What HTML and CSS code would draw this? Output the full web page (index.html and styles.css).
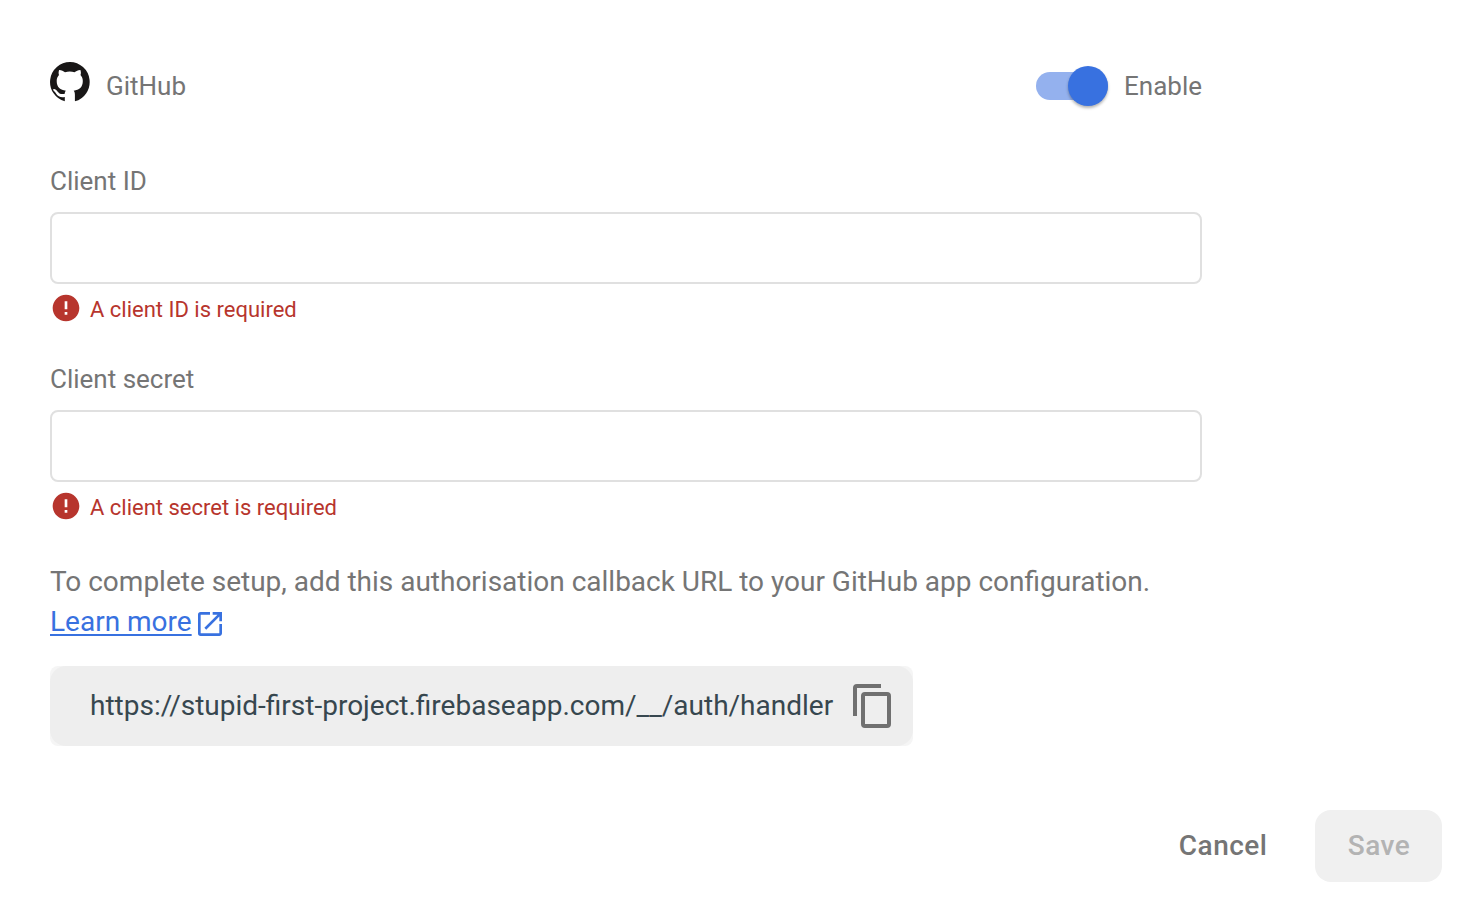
FILE: index.html
```html
<!DOCTYPE html>
<html lang="en">
<head>
<meta charset="utf-8">
<title>GitHub sign-in provider</title>
<link rel="stylesheet" href="styles.css">
</head>
<body>
<main class="panel">
  <header class="provider">
    <svg class="provider-logo" viewBox="0 0 40 40" aria-hidden="true"><path d="M20 0A20 20 0 0 0 14.800 39.300V35C10.500 35.700 8 34.500 6.200 31.800C5.100 30.100 4.300 29.200 3.300 28.300C2.300 27.200 4.300 26.600 5.900 27.700C7.500 28.800 8 30.400 9.500 31.400C11 32.200 13.200 32.100 14.800 31.700C14.800 30.200 15.200 29.300 15.900 28.700C10.300 28 6.700 25.300 6.700 19C6.700 16.400 7.700 14.600 9 13.100C8.400 11.500 8.500 9.700 9.100 8C11.300 7.900 13.400 9 15 10.200C18.100 9.400 21.400 9.400 24.500 10.200C26.200 9 28.200 7.900 30.400 8C31 9.700 31.100 11.500 30.500 13.100C31.800 14.600 32.800 16.400 32.800 19C32.800 25.300 29.100 28 23.700 28.700C24.500 29.500 24.900 30.800 24.900 32.700V39.300A20 20 0 0 0 20 0Z"/></svg>
    <span class="provider-name">GitHub</span>
    <span class="switch"><span class="switch-track"><span class="switch-thumb"></span></span></span>
    <span class="enable">Enable</span>
  </header>
  <section class="field">
    <label class="label" for="cid">Client ID</label>
    <input class="input" id="cid" type="text">
    <div class="error"><svg class="error-icon" viewBox="0 0 24 24"><path d="M12 2C6.480 2 2 6.480 2 12s4.480 10 10 10 10-4.480 10-10S17.520 2 12 2zm1 15h-2v-2h2v2zm0-4h-2V7h2v6z"/></svg><span class="error-text">A client ID is required</span></div>
  </section>
  <section class="field">
    <label class="label" for="secret">Client secret</label>
    <input class="input" id="secret" type="text">
    <div class="error"><svg class="error-icon" viewBox="0 0 24 24"><path d="M12 2C6.480 2 2 6.480 2 12s4.480 10 10 10 10-4.480 10-10S17.520 2 12 2zm1 15h-2v-2h2v2zm0-4h-2V7h2v6z"/></svg><span class="error-text">A client secret is required</span></div>
  </section>
  <p class="setup"><span class="setup-text">To complete setup, add this authorisation callback URL to your GitHub app configuration.</span><br><a class="learn" href="#">Learn more</a><svg class="open-icon" viewBox="0 0 24 24"><path d="M19 19H5V5h7V3H5a2 2 0 0 0-2 2v14a2 2 0 0 0 2 2h14c1.100 0 2-.9 2-2v-7h-2v7zM14 3v2h3.590l-9.830 9.830 1.410 1.410L19 6.410V10h2V3h-7z"/></svg></p>
  <div class="callback">
    <div class="callback-body">
      <span class="url">https://stupid-first-project.firebaseapp.com/__/auth/handler</span>
      <svg class="copy-icon" viewBox="0 0 24 24"><path d="M16 1H4a2 2 0 0 0-2 2v14h2V3h12V1zm3 4H8a2 2 0 0 0-2 2v14a2 2 0 0 0 2 2h11a2 2 0 0 0 2-2V7a2 2 0 0 0-2-2zm0 16H8V7h11v14z"/></svg>
    </div>
  </div>
  <footer class="actions">
    <button class="button cancel" type="button">Cancel</button>
    <button class="button save" type="button" disabled>Save</button>
  </footer>
</main>
</body>
</html>
```

FILE: styles.css
```css
* { box-sizing: border-box; }
body { margin: 0; background: #fff; color: #757575; font-family: Roboto, sans-serif; overflow: hidden; }
.panel { height: 910px; padding: 62px 18px 0 50px; display: flex; flex-direction: column; }
.provider { width: 1152px; height: 48px; display: flex; align-items: center; font-size: 26px; }
.provider-logo { width: 40px; height: 40px; margin: 0 16px 8px 0; fill: #191717; }
.switch { margin-left: auto; margin-right: 16px; width: 72px; }
.switch-track { display: flex; justify-content: flex-end; align-items: center; height: 28px; border-radius: 14px; background: #94b1ee; }
.switch-thumb { width: 40px; height: 40px; border-radius: 50%; background: #3871e0; box-shadow: 0 2px 3px rgba(0,0,0,.3); }
.field { width: 1152px; height: 198px; display: flex; flex-direction: column; }
.provider + .field { margin-top: 52px; }
.label { height: 50px; line-height: 38px; font-size: 26px; }
.input { height: 72px; width: 100%; border: 2px solid #e0e0e0; border-radius: 8px; background: #fff; }
.error { height: 32px; margin-top: 8px; display: flex; align-items: center; gap: 8px; color: #b7352d; font-size: 22px; line-height: 32px; }
.error-text { padding-top: 4px; }
.error-icon { width: 32px; height: 32px; fill: currentColor; }
.setup { margin: 4px 0 0; height: 80px; font-size: 28px; line-height: 40px; }
.setup-text { white-space: nowrap; word-spacing: -.05px; }
.learn { color: #3871e0; text-underline-offset: 3px; }
.open-icon { width: 32px; height: 32px; margin-left: 2px; vertical-align: -9px; fill: #3871e0; }
.callback { margin-top: 24px; width: 863px; height: 80px; border-radius: 8px; background: #f5f5f5; }
.callback-body { height: 80px; padding-left: 40px; display: flex; align-items: center; border-radius: 16px; background: #eee; color: #37474f; font-size: 28px; }
.url { width: 758.7px; padding-bottom: 2px; white-space: nowrap; }
.copy-icon { width: 48px; height: 48px; fill: #707070; }
.actions { margin-top: 64px; display: flex; justify-content: flex-end; gap: 16px; }
.button { height: 72px; padding: 0 31.5px 2px 32.5px; border: 0; border-radius: 16px; font: 500 28px Roboto, sans-serif; letter-spacing: .5px; background: transparent; color: #757575; }
.save { width: 127px; background: #f0f0f0; color: #b3b3b3; }
```
